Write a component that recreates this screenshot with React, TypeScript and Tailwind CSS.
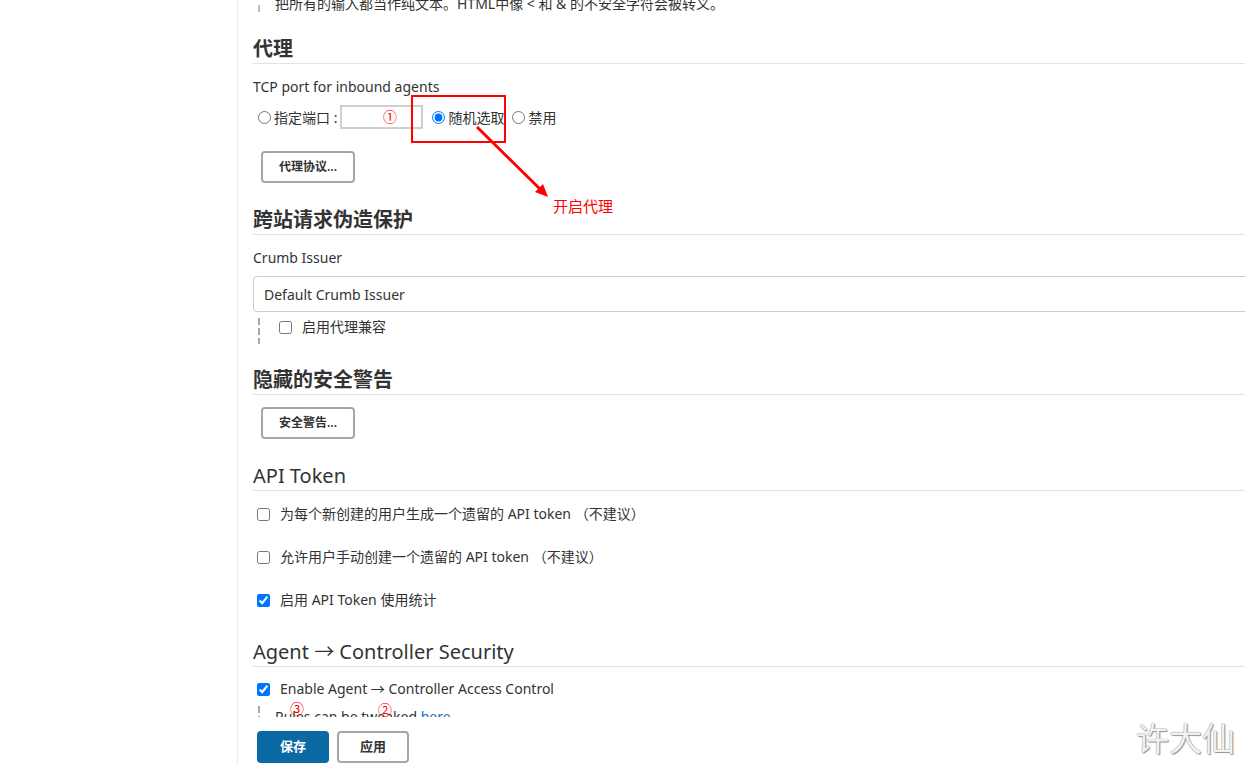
import React from "react";

const Heading = ({ children, cjk }: { children: React.ReactNode; cjk?: boolean }) => (
  <div
    className={`h-[29px] leading-[28px] text-[20px] text-[#333] border-b border-[#e3e3e3] ${
      cjk ? "font-bold" : "font-normal"
    }`}
  >
    {children}
  </div>
);

const ActionButton = ({ children }: { children: React.ReactNode }) => (
  <button className="ml-[8px] w-[94px] h-[32px] rounded-[4px] border-2 border-[#9ea8b0] bg-white text-[12px] font-semibold text-[#333] flex items-center justify-center">
    {children}
  </button>
);

const CheckRow = ({ label, checked, className }: { label: React.ReactNode; checked?: boolean; className: string }) => (
  <div className={`flex items-center h-[18px] ${className}`}>
    <input type="checkbox" defaultChecked={checked} className="ml-[4px] w-[13px] h-[13px] m-0 accent-[#0075ff]" />
    <span className="ml-[10px] text-[14px] leading-[18px] text-[#333] whitespace-nowrap">{label}</span>
  </div>
);

const dashed =
  "w-[2px] ml-[5px] bg-[repeating-linear-gradient(to_bottom,#a8a8a8_0px,#a8a8a8_7px,transparent_7px,transparent_10px)]";

export default function App() {
  return (
    <div className="relative w-[1245px] h-[765px] overflow-hidden bg-white flex font-['Noto_Sans','Noto_Sans_CJK_SC',sans-serif] text-[#333]">
      <aside className="w-[238px] shrink-0 border-r border-[#ececec]" />
      <main className="w-[1100px] shrink-0 pl-[15px] flex flex-col">
        <div className="h-[717px] shrink-0 overflow-hidden flex flex-col [&>*]:shrink-0">
          {/* top description */}
          <div className="-mt-[4px] flex h-[16px]">
            <div className="w-[2px] ml-[5px] mt-[9px] h-[7px] bg-[#bbb]" />
            <div className="pl-[15px] text-[14px] leading-[16px] whitespace-nowrap">
              把所有的输入都当作纯文本。HTML中像 &lt; 和 &amp; 的不安全字符会被转义。
            </div>
          </div>

          <div className="mt-[23px]">
            <Heading cjk>代理</Heading>
          </div>
          <div className="mt-[14px] text-[14px] leading-[18px]">TCP port for inbound agents</div>

          <div className="mt-[9px] h-[24px] flex items-center text-[14px]">
            <input type="radio" name="port" className="ml-[5px] w-[13px] h-[13px] m-0 accent-[#0075ff]" />
            <span className="ml-[3px] whitespace-nowrap">指定端口 :</span>
            <div className="ml-[3px] w-[83px] h-[24px] border-2 border-[#cfcfcf] bg-white" />
            <input type="radio" name="port" defaultChecked className="ml-[9px] w-[13px] h-[13px] m-0 accent-[#0075ff]" />
            <span className="ml-[3px] whitespace-nowrap">随机选取</span>
            <input type="radio" name="port" className="ml-[8px] w-[13px] h-[13px] m-0 accent-[#0075ff]" />
            <span className="ml-[3px] whitespace-nowrap">禁用</span>
          </div>

          <div className="mt-[22px]">
            <ActionButton>代理协议...</ActionButton>
          </div>

          <div className="mt-[23px]">
            <Heading cjk>跨站请求伪造保护</Heading>
          </div>
          <div className="mt-[14px] text-[14px] leading-[18px]">Crumb Issuer</div>
          <div className="mt-[9px] h-[36px] border border-[#cccccc] rounded-[4px] flex items-center pl-[10px] text-[14px]">
            Default Crumb Issuer
          </div>
          <div className="mt-[6px] h-[26px] flex">
            <div className={dashed} />
            <div className="flex items-center h-[18px]">
              <input type="checkbox" className="ml-[19px] w-[13px] h-[13px] m-0 accent-[#0075ff]" />
              <span className="ml-[10px] text-[14px] leading-[18px]">启用代理兼容</span>
            </div>
          </div>

          <div className="mt-[22px]">
            <Heading cjk>隐藏的安全警告</Heading>
          </div>
          <div className="mt-[12px]">
            <ActionButton>安全警告...</ActionButton>
          </div>

          <div className="mt-[23px]">
            <Heading>API Token</Heading>
          </div>
          <CheckRow className="mt-[14px]" label="为每个新创建的用户生成一个遗留的 API token （不建议）" />
          <CheckRow className="mt-[25px]" label="允许用户手动创建一个遗留的 API token （不建议）" />
          <CheckRow className="mt-[25px]" checked label="启用 API Token 使用统计" />

          <div className="mt-[29px]">
            <Heading>Agent → Controller Security</Heading>
          </div>
          <CheckRow className="mt-[13px]" checked label="Enable Agent → Controller Access Control" />
          <div className="mt-[8px] flex h-[30px]">
            <div className={dashed} />
            <div className="pl-[15px] mt-[2px] text-[14px] leading-[18px] whitespace-nowrap">
              Rules can be tweaked <span className="text-[#1b6fb5]">here</span>
            </div>
          </div>
        </div>

        <div className="pt-[14px] flex gap-[8px] pl-[4px]">
          <button className="w-[72px] h-[32px] rounded-[4px] bg-[#0b69a3] text-white text-[13px] font-bold">保存</button>
          <button className="w-[72px] h-[32px] rounded-[4px] border-2 border-[#9ea8b0] bg-white text-[#333] text-[13px] font-semibold">
            应用
          </button>
        </div>
      </main>

      {/* annotations */}
      <div className="absolute left-[411px] top-[95px] w-[95px] h-[48px] border-2 border-[#ff0000]" />
      <svg className="absolute left-0 top-0 pointer-events-none" width="1245" height="765">
        <line x1="477" y1="127" x2="541" y2="190" stroke="#ff0000" strokeWidth="3" />
        <polygon points="548,197 535,192 543,184" fill="#ff0000" />
      </svg>
      <div className="absolute left-[553px] top-[196px] text-[15px] leading-[20px] text-[#ff0000]">开启代理</div>
      <div className="absolute left-[383px] top-[107px] text-[14px] leading-[20px] text-[#ff0000]">①</div>
      <div className="absolute left-[290px] top-[700px] text-[14px] leading-[18px] text-[#ff0000]">③</div>
      <div className="absolute left-[378px] top-[701px] text-[14px] leading-[18px] text-[#ff0000]">②</div>

      <div className="absolute left-[1136px] top-[719px] text-[33px] leading-[40px] text-[#f2f2f2] [text-shadow:0_0_1px_#666,1px_1px_1px_#999]">
        许大仙
      </div>
    </div>
  );
}
